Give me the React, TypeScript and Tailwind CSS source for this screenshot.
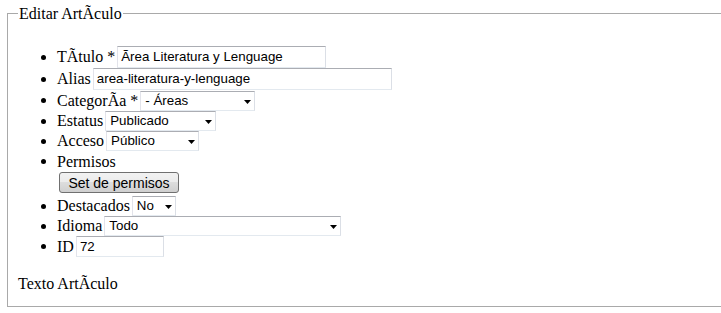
const serif = "font-['Liberation_Serif','Times_New_Roman',serif] text-[16px] text-black";
const sans = "font-['Liberation_Sans',Arial,sans-serif] text-[13.33px] text-black";
const boxBorder = 'border border-[#dbdfe6] border-t-[#abadb3] border-l-[#e2e3ea] border-b-[#e3e9ef] bg-white';

const Bullet = () => (
  <span className="flex w-[16px] shrink-0 items-center">
    <span className="h-[5px] w-[5px] rounded-full bg-black" />
  </span>
);

const TextBox = ({ value, className }: { value: string; className: string }) => (
  <div className={`${boxBorder} ${sans} flex items-center pl-[3px] ${className}`}>{value}</div>
);

const SelectBox = ({ value, className }: { value: string; className: string }) => (
  <div className={`${boxBorder} ${sans} flex items-center justify-between pl-[4px] pr-[3px] ${className}`}>
    <span>{value}</span>
    <svg width="7" height="4" viewBox="0 0 7 4" className="mt-[2px]">
      <polygon points="0,0 7,0 3.5,4" fill="#000" />
    </svg>
  </div>
);

const Row = ({ label, height, children }: { label: string; height: string; children?: React.ReactNode }) => (
  <li className={`flex items-center ${height}`}>
    <Bullet />
    <span className="mr-[2px] whitespace-nowrap">{label}</span>
    {children}
  </li>
);

export default function App() {
  return (
    <div className={`w-[721px] h-[313px] overflow-hidden bg-white ${serif}`}>
      <fieldset className="ml-[7px] mr-[-20px] mt-[3px] border border-[#a9a9a9] pl-[10px] pb-[13px]">
        <legend className="px-[1px] pt-[2px] leading-[18px]">Editar ArtÃculo</legend>

        <ul className="mt-[23px] pl-[23px] leading-[18px]">
          <Row label="TÃtulo *" height="h-[22px]">
            <TextBox value="Ãrea Literatura y Lenguage" className="h-[22px] w-[209px]" />
          </Row>
          <Row label="Alias" height="h-[22px]">
            <TextBox value="area-literatura-y-lenguage" className="h-[22px] w-[299px]" />
          </Row>
          <Row label="CategorÃa *" height="h-[21px]">
            <SelectBox value="- Áreas" className="h-[20px] w-[115px]" />
          </Row>
          <Row label="Estatus" height="h-[20px]">
            <SelectBox value="Publicado" className="h-[20px] w-[111px]" />
          </Row>
          <Row label="Acceso" height="h-[20px]">
            <SelectBox value="Público" className="h-[20px] w-[93px]" />
          </Row>
          <li className="mb-[3px] flex flex-col">
            <div className="flex h-[21px] items-center">
              <Bullet />
              <span>Permisos</span>
            </div>
            <button
              type="button"
              className={`${sans} ml-[18px] h-[21px] w-[120px] rounded-[3px] border border-[#707070] bg-[linear-gradient(#f2f2f2,#ebebeb_50%,#dddddd_50%,#cfcfcf)] text-[14px]`}
            >
              Set de permisos
            </button>
          </li>
          <Row label="Destacados" height="h-[20px]">
            <SelectBox value="No" className="h-[20px] w-[44px]" />
          </Row>
          <Row label="Idioma" height="h-[20px]">
            <SelectBox value="Todo" className="h-[20px] w-[237px]" />
          </Row>
          <Row label="ID" height="h-[21px]">
            <TextBox value="72" className="h-[21px] w-[88px]" />
          </Row>
        </ul>

        <p className="mt-[18px] leading-[18px]">Texto ArtÃculo</p>
      </fieldset>
    </div>
  );
}
